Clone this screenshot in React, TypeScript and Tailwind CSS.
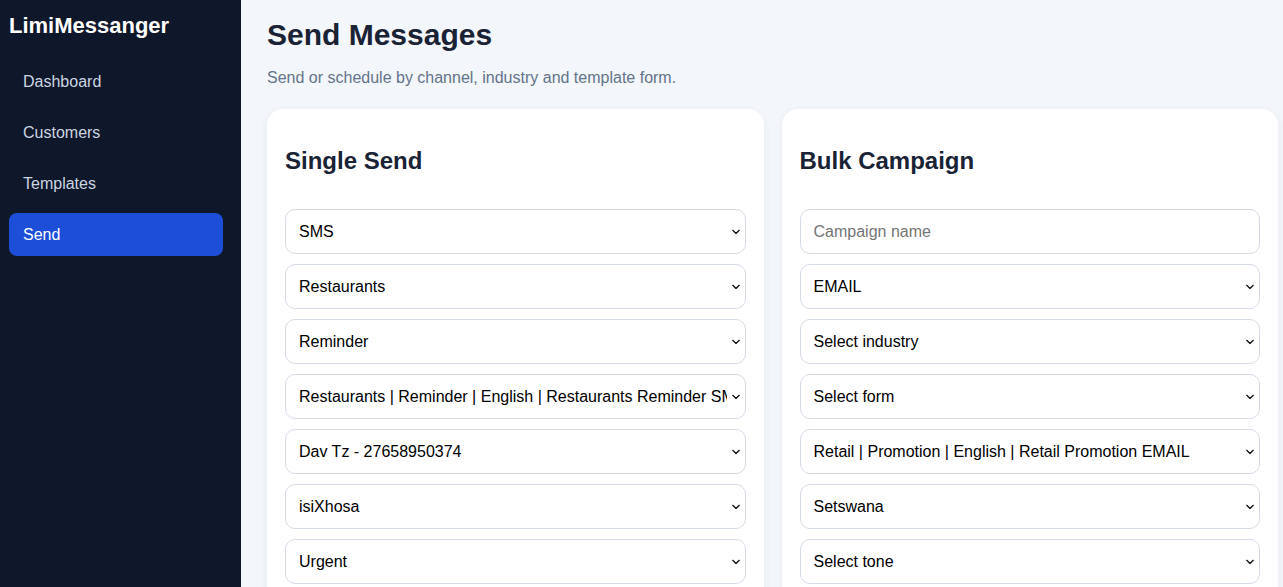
import type { ReactNode } from "react"

const navItems = ["Dashboard", "Customers", "Templates", "Send"]

const fieldClass =
  "block h-[45px] w-full rounded-[10px] border border-[#d5dbe5] bg-white pl-[13px] text-base text-black outline-none"

function Select({ value, options }: { value: string; options?: string[] }) {
  const opts = options ?? [value]
  return (
    <div className="relative">
      <select className={`${fieldClass} appearance-none overflow-hidden pr-[18px] whitespace-nowrap`} defaultValue={value}>
        {opts.map((o) => (
          <option key={o} value={o}>
            {o}
          </option>
        ))}
      </select>
      <svg
        className="pointer-events-none absolute top-1/2 right-[6px] -translate-y-1/2"
        width="8"
        height="5"
        viewBox="0 0 8 5"
        fill="none"
      >
        <path d="M0.8 0.8 L4 4 L7.2 0.8" stroke="#111" strokeWidth="1.3" strokeLinecap="round" strokeLinejoin="round" />
      </svg>
    </div>
  )
}

function Card({ title, children }: { title: string; children: ReactNode }) {
  return (
    <div className="rounded-2xl bg-white px-[18px] pt-[38px] pb-6 shadow-[0_2px_10px_rgba(15,23,42,0.06)]">
      <h2 className="text-2xl leading-[28px] font-bold text-[#1a2335]">{title}</h2>
      <div className="mt-[34px] flex flex-col gap-[10px]">{children}</div>
    </div>
  )
}

export default function App() {
  return (
    <div className="flex h-[587px] overflow-hidden font-['Liberation_Sans',Arial,sans-serif]">
      {/* Sidebar */}
      <aside className="w-[241px] shrink-0 bg-[#0f172a] pt-[10px] pl-[9px] pr-[18px]">
        <div className="h-[32px] text-[22px] leading-[32px] font-bold text-white">LimiMessanger</div>
        <nav className="mt-[18px] flex flex-col gap-[8px]">
          {navItems.map((item) => (
            <div
              key={item}
              className={
                item === "Send"
                  ? "flex h-[43px] items-center rounded-lg bg-[#1d4ed8] px-[14px] text-base text-white"
                  : "flex h-[43px] items-center rounded-lg px-[14px] text-base text-[#cbd5e1]"
              }
            >
              {item}
            </div>
          ))}
        </nav>
      </aside>

      {/* Main */}
      <main className="flex-1 bg-[#f3f6fa] pt-[17px] pl-[26px] pr-[5px]">
        <h1 className="text-[30px] leading-[36px] font-bold text-[#1a2335]">Send Messages</h1>
        <p className="mt-[13px] text-base leading-6 text-[#64748b]">
          Send or schedule by channel, industry and template form.
        </p>

        <div className="mt-[19px] grid grid-cols-2 gap-[18px]">
          <Card title="Single Send">
            <Select value="SMS" options={["SMS", "EMAIL", "WHATSAPP"]} />
            <Select value="Restaurants" />
            <Select value="Reminder" />
            <Select value="Restaurants | Reminder | English | Restaurants Reminder SMS" />
            <Select value="Dav Tz - 27658950374" />
            <Select value="isiXhosa" />
            <Select value="Urgent" />
          </Card>

          <Card title="Bulk Campaign">
            <input
              className={`${fieldClass} pr-[13px] placeholder:text-[#757575]`}
              placeholder="Campaign name"
            />
            <Select value="EMAIL" options={["SMS", "EMAIL", "WHATSAPP"]} />
            <Select value="Select industry" />
            <Select value="Select form" />
            <Select value="Retail | Promotion | English | Retail Promotion EMAIL" />
            <Select value="Setswana" />
            <Select value="Select tone" />
          </Card>
        </div>
      </main>
    </div>
  )
}
